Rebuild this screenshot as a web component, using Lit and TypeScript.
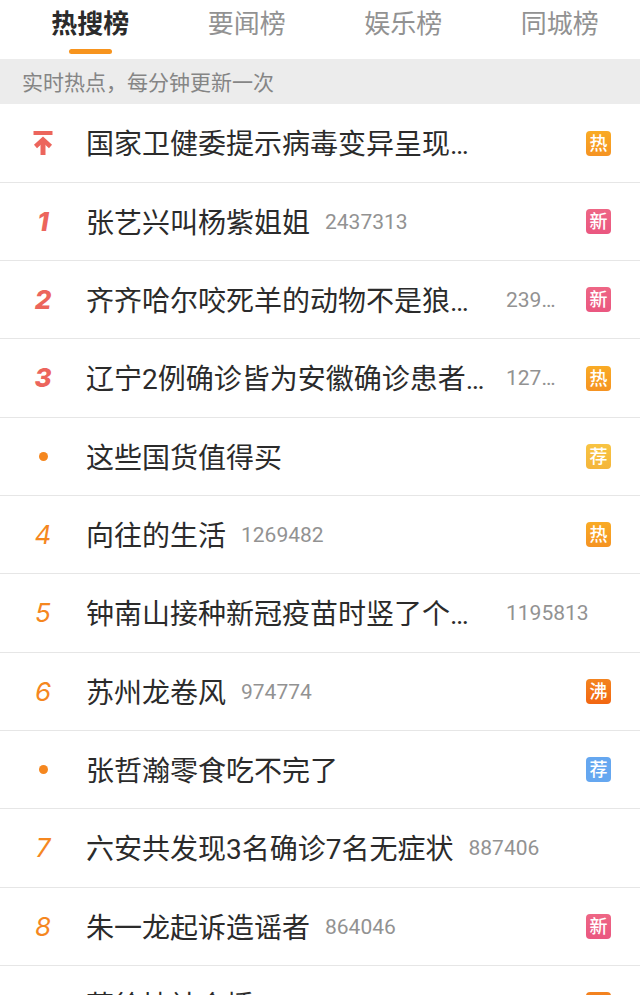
import { LitElement, html, css, nothing } from "lit";
import { customElement, property } from "lit/decorators.js";

type Tag = "hot" | "fresh" | "boil" | "pick" | "ad";

interface Topic {
  rank: string;
  title: string;
  count?: string;
  tag?: Tag;
}

const TAG_TEXT: Record<Tag, string> = {
  hot: "热",
  fresh: "新",
  boil: "沸",
  pick: "荐",
  ad: "荐",
};

const TABS = ["热搜榜", "要闻榜", "娱乐榜", "同城榜"];

const TOPICS: Topic[] = [
  { rank: "top", title: "国家卫健委提示病毒变异呈现…", tag: "hot" },
  { rank: "1", title: "张艺兴叫杨紫姐姐", count: "2437313", tag: "fresh" },
  { rank: "2", title: "齐齐哈尔咬死羊的动物不是狼…", count: "239…", tag: "fresh" },
  { rank: "3", title: "辽宁2例确诊皆为安徽确诊患者…", count: "127…", tag: "hot" },
  { rank: "dot", title: "这些国货值得买", tag: "pick" },
  { rank: "4", title: "向往的生活", count: "1269482", tag: "hot" },
  { rank: "5", title: "钟南山接种新冠疫苗时竖了个…", count: "1195813" },
  { rank: "6", title: "苏州龙卷风", count: "974774", tag: "boil" },
  { rank: "dot", title: "张哲瀚零食吃不完了", tag: "ad" },
  { rank: "7", title: "六安共发现3名确诊7名无症状", count: "887406" },
  { rank: "8", title: "朱一龙起诉造谣者", count: "864046", tag: "fresh" },
  { rank: "9", title: "蔡徐坤社会播", tag: "boil" },
];

@customElement("topic-row")
class TopicRow extends LitElement {
  @property({ attribute: false }) topic!: Topic;

  static styles = css`
    :host {
      display: block;
      height: 100%;
    }
    .row {
      display: flex;
      align-items: center;
      height: 100%;
      color: #2b2b2b;
      text-decoration: none;
    }
    .rank {
      flex: none;
      display: flex;
      justify-content: center;
      width: 86px;
      font: italic 400 26px/32px Inter, "Liberation Sans", sans-serif;
      color: #f5871f;
    }
    .rank.lead {
      font-weight: 800;
      color: #ec655c;
    }
    .dot {
      width: 9px;
      height: 9px;
      border-radius: 50%;
      background: #f5871f;
    }
    .body {
      flex: 1;
      min-width: 0;
      display: flex;
      align-items: center;
      padding-right: 29px;
    }
    .title {
      flex: none;
      margin-right: 15px;
      padding-top: 4px;
      font-size: 28px;
      line-height: 40px;
      white-space: nowrap;
    }
    .title.long {
      width: calc(100% - 120px);
    }
    .count {
      font-size: 21px;
      line-height: 28px;
      color: #929292;
    }
    .tag {
      flex: none;
      width: 25px;
      height: 25px;
      margin-left: auto;
      border-radius: 4px;
      font-size: 18px;
      line-height: 25px;
      font-weight: 500;
      text-align: center;
      color: #fff;
    }
    .hot {
      background: linear-gradient(#f9ab25, #f59322);
    }
    .fresh {
      background: linear-gradient(#ee6685, #ea5780);
    }
    .boil {
      background: linear-gradient(#f38420, #f26611);
    }
    .pick {
      background: linear-gradient(#f8c443, #f4b53a);
    }
    .ad {
      background: #65a7f0;
    }
  `;

  private rankMark() {
    const { rank } = this.topic;
    if (rank === "dot") return html`<span class="rank"><span class="dot"></span></span>`;
    if (rank === "top") {
      return html`<span class="rank lead">
        <svg width="20" height="24" viewBox="0 0 20 24" fill="none" stroke="currentColor" role="img" aria-label="置顶">
          <path d="M0.5 2H19.5" stroke-width="4" />
          <path d="M2.5 15.5L10 8.5L17.5 15.5" stroke-width="4.5" />
          <path d="M10 8V24" stroke-width="5" />
        </svg>
      </span>`;
    }
    return html`<span class="rank ${Number(rank) <= 3 ? "lead" : ""}">${rank}</span>`;
  }

  render() {
    const { title, count, tag } = this.topic;
    return html`<a class="row" href="#">
      ${this.rankMark()}
      <span class="body">
        <span class="title ${title.endsWith("…") ? "long" : ""}">${title}</span>
        ${count ? html`<span class="count">${count}</span>` : nothing}
        ${tag ? html`<span class="tag ${tag}">${TAG_TEXT[tag]}</span>` : nothing}
      </span>
    </a>`;
  }
}

@customElement("app-root")
class AppRoot extends LitElement {
  static styles = css`
    :host {
      display: block;
      height: 100vh;
      overflow: hidden;
      background: #fff;
      font-family: Roboto, "Noto Sans CJK SC", sans-serif;
    }
    .tabs {
      display: flex;
      padding: 0 2px 0 12px;
      height: 59px;
    }
    .tab {
      flex: 1;
      display: flex;
      flex-direction: column;
      align-items: center;
      padding: 5px 0 0;
      border: 0;
      background: none;
      font: 400 26px/38px Roboto, "Noto Sans CJK SC", sans-serif;
      color: #929292;
    }
    .tab.active {
      font-weight: 700;
      color: #2b2b2b;
    }
    .tab.active::after {
      content: "";
      width: 43px;
      height: 5px;
      margin-top: 6px;
      border-radius: 3px;
      background: #f7941e;
    }
    .note {
      margin: 0;
      padding: 4px 22px 0;
      font-size: 21px;
      line-height: 41px;
      background: #ececec;
      color: #858585;
    }
    .list {
      margin: 0;
      padding: 0;
      list-style: none;
    }
    .item {
      box-sizing: border-box;
      height: 78px;
      border-bottom: 1px solid #e6e6e6;
    }
    .item:nth-child(3n + 1) {
      height: 79px;
    }
  `;

  render() {
    return html`
      <nav class="tabs">
        ${TABS.map((t, i) => html`<button class="tab ${i === 0 ? "active" : ""}">${t}</button>`)}
      </nav>
      <p class="note">实时热点，每分钟更新一次</p>
      <ul class="list">
        ${TOPICS.map((t) => html`<li class="item"><topic-row .topic=${t}></topic-row></li>`)}
      </ul>
    `;
  }
}
